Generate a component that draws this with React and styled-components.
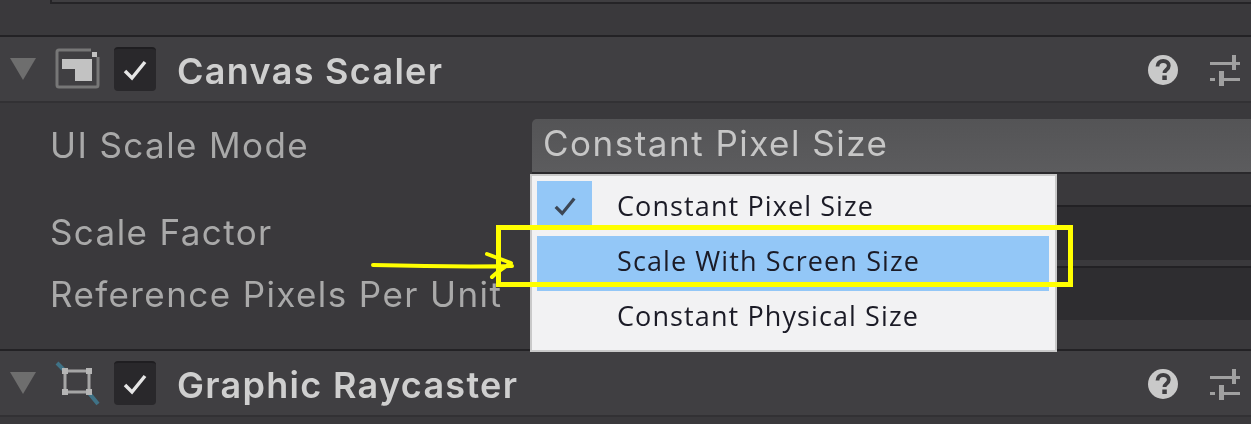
import React from 'react';
import styled, { createGlobalStyle } from 'styled-components';

const GlobalStyle = createGlobalStyle`
  html, body {
    margin: 0;
    padding: 0;
    background: #3a393c;
    overflow: hidden;
  }
  * { box-sizing: border-box; }
`;

const Inspector = styled.div`
  position: relative;
  width: 1251px;
  height: 424px;
  overflow: hidden;
  background: #3a393c;
  font-family: Inter, "Noto Sans", sans-serif;
  filter: blur(0.45px);
`;

const TopStrip = styled.div`
  height: 37px;
  padding-left: 50px;
  border-bottom: 2px solid #232225;
`;

const TopField = styled.div`
  height: 4px;
  background: #3f3e41;
  border-bottom: 2px solid #252427;
  border-left: 2px solid #252427;
`;

const Header = styled.div`
  display: flex;
  align-items: center;
  height: ${(props) => props.height}px;
  padding-left: 10px;
  background: #403f42;
  border-bottom: 2px solid #323134;
`;

const Fold = styled.div`
  width: 0;
  height: 0;
  margin-right: 19px;
  border-left: 13px solid transparent;
  border-right: 13px solid transparent;
  border-top: 22px solid #6e6e6e;
`;

const ComponentIcon = styled.svg`
  width: 46px;
  height: 46px;
  flex: none;
  margin-right: 13px;
`;

const Toggle = styled.div`
  display: flex;
  align-items: center;
  justify-content: center;
  width: 42px;
  height: 44px;
  flex: none;
  background: #29282b;
  border-radius: 4px;
  border-top: 2px solid #1f1e21;
`;

const Title = styled.div`
  margin-left: 21px;
  padding-top: 3px;
  font-size: 36px;
  font-weight: 600;
  letter-spacing: 1.3px;
  color: #cfcfcf;
  white-space: nowrap;
`;

const HeaderTools = styled.div`
  display: flex;
  align-items: center;
  gap: 30px;
  margin-left: auto;
  margin-right: 10px;
  padding-top: 2px;
`;

const Body = styled.div`
  height: 248px;
  padding-top: 16px;
  border-bottom: 2px solid #232225;
`;

const Row = styled.div`
  display: grid;
  grid-template-columns: 532px 1fr;
  align-items: center;
  height: ${(props) => props.height}px;
  margin-top: ${(props) => props.top || 0}px;
`;

const Label = styled.div`
  padding-left: 50px;
  padding-bottom: ${(props) => props.lift || 0}px;
  font-size: 35px;
  letter-spacing: 1.4px;
  color: #a9a9a9;
  white-space: nowrap;
`;

const SelectBox = styled.div`
  display: flex;
  align-items: center;
  height: 100%;
  padding: 0 0 5px 11px;
  background: linear-gradient(#545456, #5c5c5e);
  border-bottom: 2px solid #2a292c;
  border-radius: 5px 0 0 0;
  font-size: 35px;
  letter-spacing: 1.5px;
  color: #c6c6c6;
`;

const NumberField = styled.div`
  align-self: start;
  height: ${(props) => props.height}px;
  background: #2e2d30;
  border-top: 2px solid #222124;
`;

const Popup = styled.div`
  position: absolute;
  left: 530px;
  top: 174px;
  width: 527px;
  height: 178px;
  padding: 5px 6px 0 5px;
  background: #f2f2f3;
  border: 2px solid #c9c9c9;
  font-family: "Open Sans", "Noto Sans", sans-serif;
  font-size: 27px;
  color: #1b1b26;
`;

const MenuItem = styled.div`
  display: flex;
  align-items: center;
  height: 55px;
  background: ${(props) => (props.active ? '#93c7f7' : 'transparent')};
`;

const CheckCell = styled.div`
  display: flex;
  align-items: center;
  justify-content: center;
  align-self: flex-start;
  width: 55px;
  height: 49px;
  flex: none;
  background: ${(props) => (props.checked ? '#93c7f7' : 'transparent')};
`;

const MenuText = styled.div`
  margin-left: 25px;
  padding-bottom: 6px;
  letter-spacing: 1.1px;
  white-space: nowrap;
`;

const Annotation = styled.div`
  position: absolute;
  left: 496px;
  top: 225px;
  width: 577px;
  height: 62px;
  border: 5px solid #ffff00;
`;

const Arrow = styled.svg`
  position: absolute;
  left: 365px;
  top: 245px;
  width: 160px;
  height: 40px;
`;

const Check = ({ color = '#e6e6e6', size = 28 }) => (
  <svg width={size} height={size} viewBox="0 0 28 28" fill="none">
    <path d="M4 15l7 7L24 6" stroke={color} strokeWidth="3.500" />
  </svg>
);

const HelpIcon = () => (
  <svg width="32" height="32" viewBox="0 0 32 32">
    <circle cx="16" cy="16" r="15" fill="#c9c9c9" />
    <path d="M10.500 12.500c0-3.500 2.500-5.500 5.700-5.500 3.300 0 5.600 1.900 5.600 4.800 0 3.900-4.300 4-4.300 7.200" fill="none" stroke="#3f3e41" strokeWidth="3.800" />
    <rect x="15.300" y="21.500" width="4.500" height="4.500" fill="#3f3e41" />
  </svg>
);

const SlidersIcon = () => (
  <svg width="32" height="32" viewBox="0 0 32 32" fill="#a0a0a0">
    <rect x="1" y="8" width="22" height="3" />
    <rect x="23" y="1" width="4" height="15" />
    <rect x="27" y="8" width="4" height="3" />
    <rect x="1" y="24" width="5" height="3" />
    <rect x="10" y="17" width="5" height="15" />
    <rect x="15" y="24" width="16" height="3" />
  </svg>
);

const ScalerIcon = () => (
  <ComponentIcon viewBox="0 0 46 46" fill="none">
    <path d="M36 4H4a2 2 0 0 0-2 2v33a2 2 0 0 0 2 2h37a2 2 0 0 0 2-2V11" stroke="#777" strokeWidth="3" />
    <path d="M7 13h30v22H20V23H7z" fill="#c2c2c2" />
    <rect x="37" y="6" width="5" height="5" fill="#c2c2c2" />
  </ComponentIcon>
);

const RectIcon = () => (
  <ComponentIcon viewBox="0 0 46 46" fill="none">
    <path d="M2 3l8 8M34 33l9 11" stroke="#3f7286" strokeWidth="4" />
    <rect x="10" y="11" width="24" height="21" stroke="#a5a5a5" strokeWidth="3" />
    <g fill="#b5b5b5">
      <rect x="7" y="8" width="6" height="6" />
      <rect x="31" y="8" width="6" height="6" />
      <rect x="7" y="29" width="6" height="6" />
      <rect x="31" y="29" width="6" height="6" />
    </g>
  </ComponentIcon>
);

const ComponentHeader = ({ icon, title, height }) => (
  <Header height={height}>
    <Fold />
    {icon}
    <Toggle>
      <Check />
    </Toggle>
    <Title>{title}</Title>
    <HeaderTools>
      <HelpIcon />
      <SlidersIcon />
    </HeaderTools>
  </Header>
);

export default function App() {
  return (
    <Inspector>
      <GlobalStyle />
      <TopStrip>
        <TopField />
      </TopStrip>
      <ComponentHeader icon={<ScalerIcon />} title="Canvas Scaler" height={66} />
      <Body>
        <Row height={55}>
          <Label lift={4}>UI Scale Mode</Label>
          <SelectBox>Constant Pixel Size</SelectBox>
        </Row>
        <Row height={55} top={31}>
          <Label lift={2}>Scale Factor</Label>
          <NumberField height={55} />
        </Row>
        <Row height={56} top={6}>
          <Label>Reference Pixels Per Unit</Label>
          <NumberField height={54} />
        </Row>
      </Body>
      <ComponentHeader icon={<RectIcon />} title="Graphic Raycaster" height={66} />

      <Popup>
        <MenuItem>
          <CheckCell checked>
            <Check color="#3c4654" size={26} />
          </CheckCell>
          <MenuText>Constant Pixel Size</MenuText>
        </MenuItem>
        <MenuItem active>
          <CheckCell />
          <MenuText>Scale With Screen Size</MenuText>
        </MenuItem>
        <MenuItem>
          <CheckCell />
          <MenuText>Constant Physical Size</MenuText>
        </MenuItem>
      </Popup>

      <Annotation />
      <Arrow viewBox="0 0 160 40" fill="none">
        <path d="M8 20c40 1 90 2 139 1M122 9l24 9c-6 4-13 8-19 14" stroke="#ffff00" strokeWidth="4" strokeLinecap="round" strokeLinejoin="round" />
      </Arrow>
    </Inspector>
  );
}
